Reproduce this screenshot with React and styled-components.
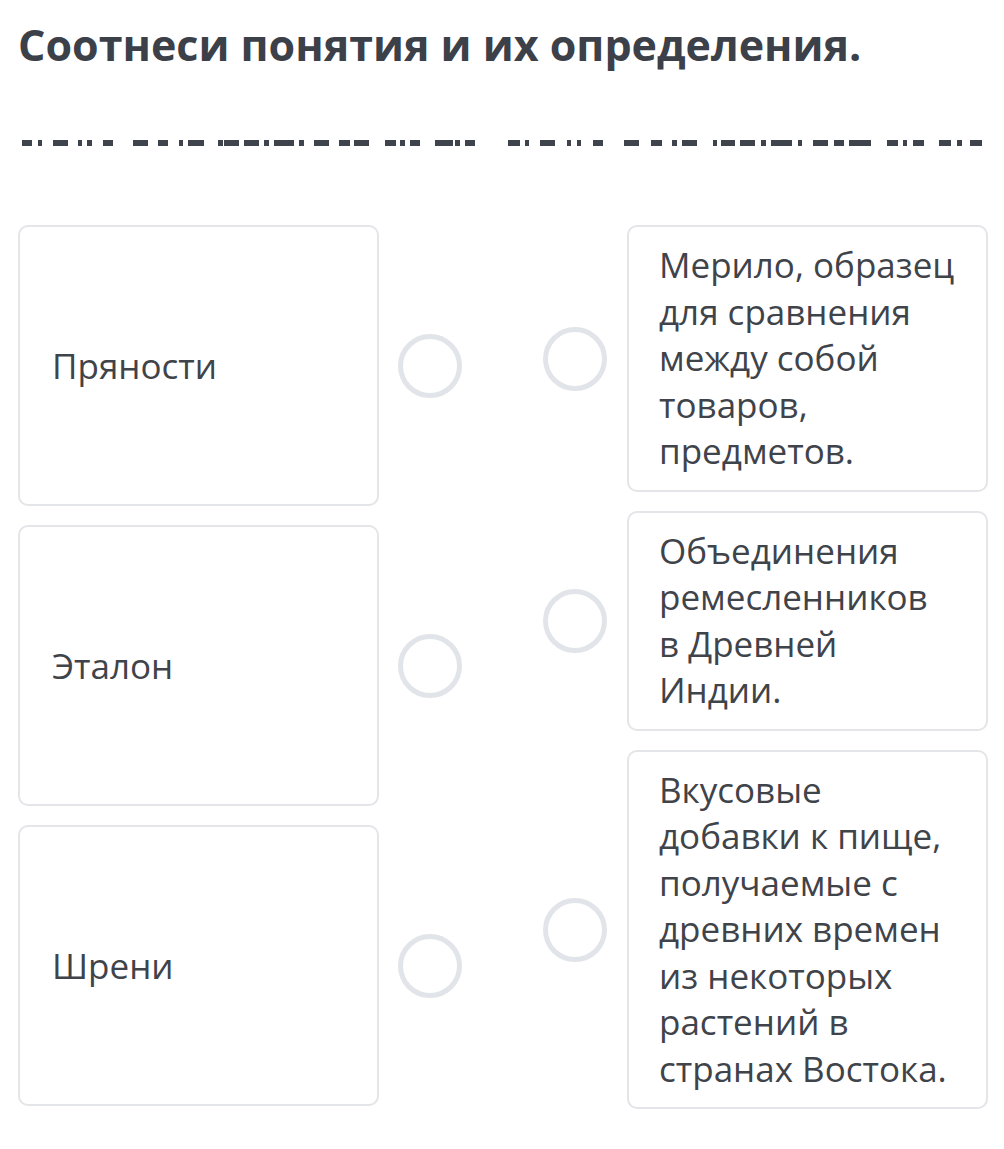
import React from 'react';
import styled, { createGlobalStyle } from 'styled-components';

const GlobalStyle = createGlobalStyle`
  html, body {
    margin: 0;
    padding: 0;
    background: #ffffff;
  }
  body {
    font-family: 'Open Sans', 'Noto Sans', sans-serif;
    color: #3f434a;
  }
`;

const Page = styled.div`
  width: 1004px;
  min-height: 1149px;
  box-sizing: border-box;
  padding: 16px 16px 40px 18px;
`;

const Title = styled.h1`
  margin: 0;
  font-size: 43px;
  line-height: 1.36;
  font-weight: 700;
  color: #3b4049;
  letter-spacing: 0;
`;

const Redacted = styled.svg`
  display: block;
  margin-top: 66px;
  margin-left: 4px;
`;

const Board = styled.div`
  margin-top: 79px;
  display: flex;
  justify-content: space-between;
  width: 970px;
`;

const Column = styled.div`
  display: flex;
  flex-direction: column;
  gap: 19px;
`;

const Row = styled.div`
  display: flex;
  align-items: center;
  gap: ${(p) => (p.$right ? '20px' : '19px')};
`;

const Card = styled.div`
  width: 361px;
  box-sizing: border-box;
  border: 2px solid #e3e5e8;
  border-radius: 10px;
  background: #fff;
  font-size: 35px;
  line-height: 46.5px;
  color: #3f434a;
  display: flex;
  align-items: center;
`;

const TermCard = styled(Card)`
  height: 281px;
  padding: 0 20px 0 32px;
`;

const DefCard = styled(Card)`
  padding: 15px 24px 15px 30px;
`;

const Dot = styled.div`
  width: 64px;
  height: 64px;
  box-sizing: border-box;
  border: 5px solid #e1e4e8;
  border-radius: 50%;
  flex-shrink: 0;
  background: #fff;
`;

const blocks = [
  [22, 10], [38, 4], [53, 15], [78, 4], [87, 5], [103, 10],
  [133, 15], [158, 10], [179, 4], [188, 16],
  [218, 5], [224, 15], [244, 15], [264, 5], [274, 20], [299, 5], [314, 15], [339, 11], [354, 15],
  [385, 11], [400, 5], [410, 10],
  [435, 18], [455, 5], [465, 10],
  [508, 12], [525, 4], [540, 15], [567, 4], [577, 4], [593, 10],
  [624, 15], [651, 11], [672, 5], [682, 15],
  [713, 4], [721, 14], [740, 15], [761, 5], [771, 21], [798, 4], [813, 15], [834, 10], [849, 22],
  [887, 11], [903, 4], [913, 11],
  [939, 12], [957, 5], [970, 12],
];

const terms = ['Пряности', 'Эталон', 'Шрени'];

const definitions = [
  'Мерило, образец для сравнения между собой товаров, предметов.',
  'Объединения ремесленников в\u00a0Древней Индии.',
  'Вкусовые добавки к пище, получаемые с древних времен из некоторых растений в странах Востока.',
];

const App = () => (
  <Page>
    <GlobalStyle />
    <Title>Соотнеси понятия и их определения.</Title>

    {/* скрытая строка под заголовком */}
    <Redacted width="962" height="6" viewBox="22 0 962 6">
      {blocks.map(([x, w]) => (
        <rect key={x} x={x} y="0" width={w} height="6" fill="#3f444c" />
      ))}
    </Redacted>

    <Board>
      <Column>
        {terms.map((t) => (
          <Row key={t}>
            <TermCard>{t}</TermCard>
            <Dot />
          </Row>
        ))}
      </Column>
      <Column>
        {definitions.map((d) => (
          <Row key={d} $right>
            <Dot />
            <DefCard>{d}</DefCard>
          </Row>
        ))}
      </Column>
    </Board>
  </Page>
);

export default App;
